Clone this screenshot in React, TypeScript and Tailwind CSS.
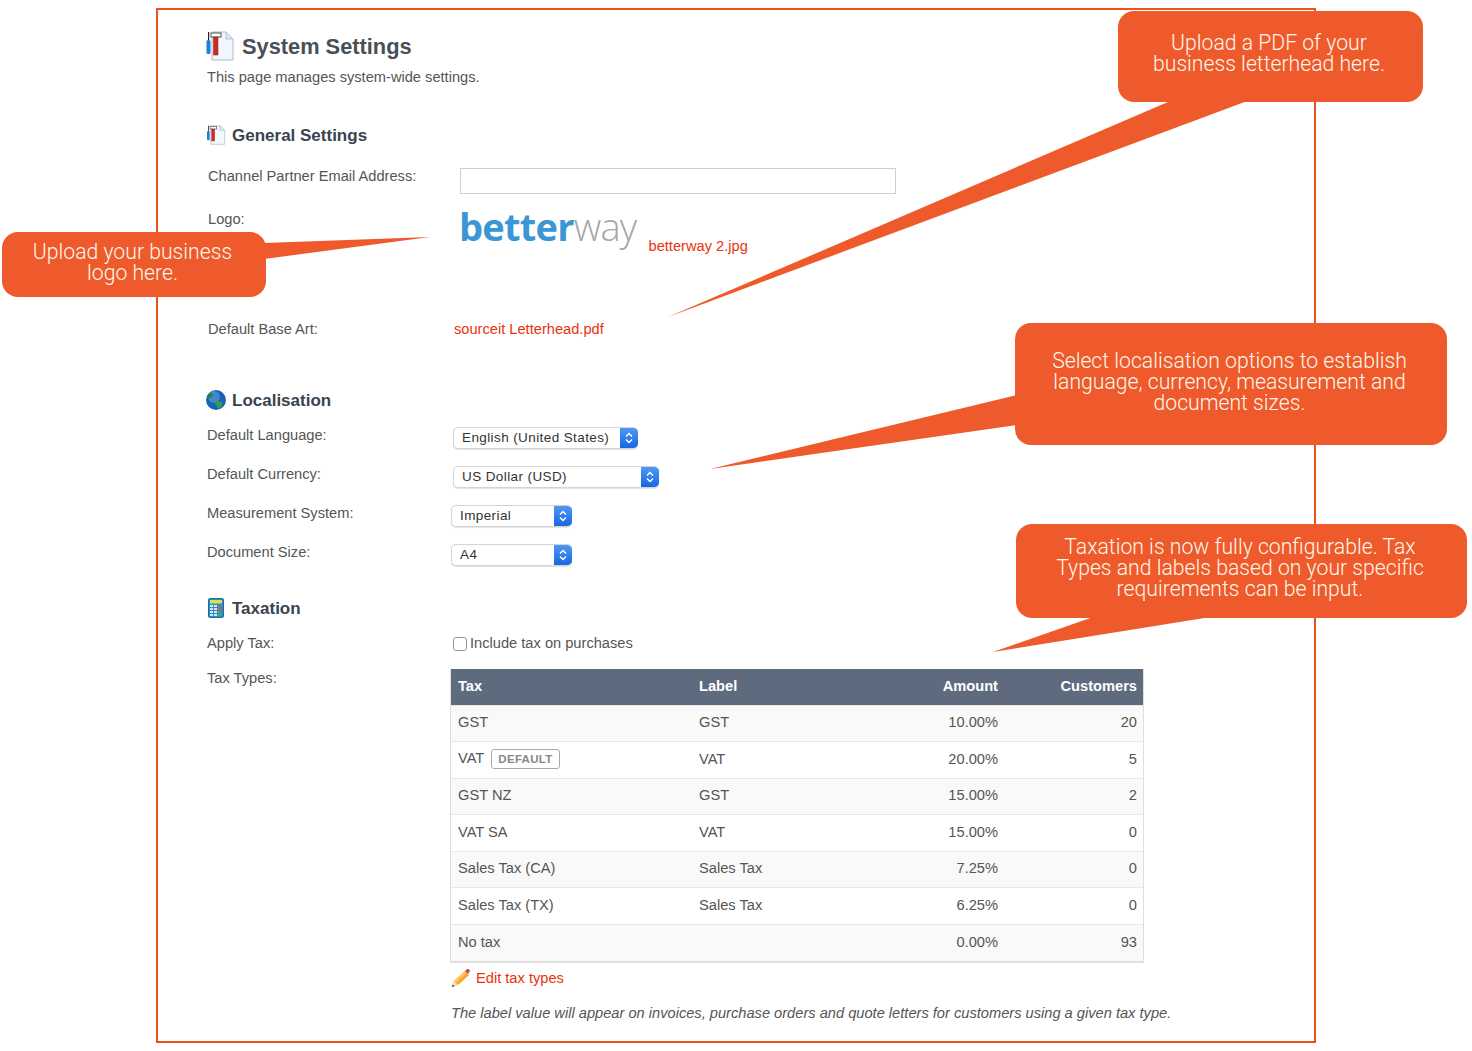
import type { ReactNode } from 'react';

const TAX_ROWS = [
  { tax: 'GST', label: 'GST', amount: '10.00%', customers: 20 },
  { tax: 'VAT', label: 'VAT', amount: '20.00%', customers: 5, isDefault: true },
  { tax: 'GST NZ', label: 'GST', amount: '15.00%', customers: 2 },
  { tax: 'VAT SA', label: 'VAT', amount: '15.00%', customers: 0 },
  { tax: 'Sales Tax (CA)', label: 'Sales Tax', amount: '7.25%', customers: 0 },
  { tax: 'Sales Tax (TX)', label: 'Sales Tax', amount: '6.25%', customers: 0 },
  { tax: 'No tax', label: '', amount: '0.00%', customers: 93 },
];

function SettingsIcon({ className }: { className: string }) {
  return (
    <svg viewBox="0 0 28 30" className={className}>
      <path d="M6 1h14l7 7v21H6z" fill="#f1f7fd" stroke="#a9bad2" strokeWidth="1" />
      <path d="M20 1v7h7z" fill="#dbe7f4" stroke="#b4c4da" strokeWidth="1" />
      <rect x="5" y="2" width="10" height="4" fill="#fff" stroke="#555" strokeWidth="1" />
      <rect x="7.500" y="6" width="4.500" height="18" fill="#cf2a22" stroke="#8e1d18" strokeWidth="0.5" />
      <rect x="2" y="1" width="1.200" height="9" fill="#222" />
      <rect x="0.500" y="9" width="4" height="14" rx="1.500" fill="#1f7fd6" />
    </svg>
  );
}

function GlobeIcon() {
  return (
    <svg viewBox="0 0 20 20" className="h-5 w-5 shrink-0">
      <circle cx="10" cy="10" r="10" fill="#1b62b4" />
      <circle cx="8" cy="7" r="6" fill="#5aa0dc" opacity="0.6" />
      <path d="M9 13c2-2 5-2 7-1 1 1 0 4-2 6-2 1-3 0-3-2s-3-1-2-3z" fill="#2fa244" />
      <path d="M1 6c2-2 4-3 6-2 0 2-3 4-5 5z" fill="#2c7a3e" />
    </svg>
  );
}

function CalculatorIcon() {
  return (
    <svg viewBox="0 0 16 20" className="h-5 w-4 shrink-0">
      <rect x="0.500" y="0.500" width="15" height="19" rx="1.500" fill="#2f8fc4" stroke="#1d6b9c" />
      <rect x="2" y="2" width="12" height="3.500" fill="#d8e05a" />
      {[7, 10, 13, 16].map((y) =>
        [2, 6, 10].map((x) => (
          <rect key={`${x}-${y}`} x={x} y={y} width="3" height="2" fill={x === 10 && y < 12 ? '#e2574c' : x === 10 ? '#4caf50' : '#d5e8f5'} />
        )),
      )}
    </svg>
  );
}

function PencilIcon() {
  return (
    <svg viewBox="0 0 20 20" className="h-5 w-5 shrink-0">
      <path d="M1 19l2-6L14 3l4 4L7 17z" fill="#f5a623" />
      <path d="M3 13l11-10 2 2L5 15z" fill="#fbc65c" />
      <path d="M14 3l1.500-1.500c1-.8 2-.6 2.700.1.7.8.8 1.800 0 2.700L17 6z" fill="#c9445a" />
      <path d="M1 19l2-6 4 4z" fill="#f6dfb5" />
      <path d="M1 19l.8-2.500 1.700 1.700z" fill="#333" />
    </svg>
  );
}

function SectionHeading({ icon, children, className }: { icon: ReactNode; children: ReactNode; className: string }) {
  return (
    <div className={`flex h-6 items-center gap-[6px] ${className}`}>
      {icon}
      <h2 className="pt-[2px] text-[17px] leading-6 font-bold text-[#3a4350]">{children}</h2>
    </div>
  );
}

function FakeSelect({ value, className }: { value: string; className: string }) {
  return (
    <div className={`flex h-[22px] overflow-hidden rounded-[5px] border border-r-0 border-[#d4d4d4] bg-white shadow-[0_1px_1px_rgba(0,0,0,0.12)] ${className}`}>
      <span className="flex-1 pl-[8px] text-[13.500px] leading-5 tracking-[0.4px] text-[#333]">{value}</span>
      <span className="flex w-[18px] items-center justify-center bg-gradient-to-b from-[#4d97f8] to-[#1766e2]">
        <svg viewBox="0 0 10 14" className="h-[14px] w-[10px]" fill="none" stroke="#fff" strokeWidth="1.500">
          <path d="M2 5.500L5 2.500 8 5.500M2 8.500L5 11.500 8 8.500" />
        </svg>
      </span>
    </div>
  );
}

function Callout({ lines, className }: { lines: string[]; className: string }) {
  return (
    <div className={`absolute flex flex-col rounded-[16px] bg-[#ee5a2b] pr-[3px] text-center font-['Roboto',sans-serif] text-[21.200px] leading-[21px] font-light text-[#fff8ea] ${className}`}>
      {lines.map((line) => (
        <span key={line}>{line}</span>
      ))}
    </div>
  );
}

export default function App() {
  return (
    <div className="relative h-[1051px] w-[1472px] overflow-hidden bg-white font-['Liberation_Sans',sans-serif] text-[14.650px] leading-5 text-[#555]">
      {/* settings page */}
      <div className="mt-2 ml-[156px] h-[1035px] w-[1160px] border-2 border-[#f0501a] pt-[18px] pl-[49px]">
        <div className="-ml-px flex h-9 items-center gap-[8px]">
          <SettingsIcon className="h-[30px] w-[28px] shrink-0" />
          <h1 className="pt-[2px] text-[21.800px] font-bold text-[#4a4f57]">System Settings</h1>
        </div>
        <p className="mt-[3px]">This page manages system-wide settings.</p>

        <SectionHeading className="mt-[36px] -ml-px" icon={<SettingsIcon className="h-5 w-5 shrink-0" />}>
          General Settings
        </SectionHeading>

        <div className="mt-[13px] flex h-10 pl-px">
          <label className="w-[243px] pt-[6px]">Channel Partner Email Address:</label>
          <div className="mt-2 ml-[9px] h-[26px] w-[436px] border border-[#cfcfcf] bg-white" />
        </div>

        <div className="flex h-[100px] pl-px">
          <label className="w-[243px] pt-[9px]">Logo:</label>
          <div className="ml-[8px] flex h-[60px] items-start">
            <span className="font-['Open_Sans',sans-serif] text-[38px] leading-[52px] tracking-[-0.75px]">
              <span className="font-bold text-[#3a97d4]">better</span>
              <span className="font-light text-[#a4a7aa]">way</span>
            </span>
            <a className="mt-[36px] ml-3 text-[#e8330c]">betterway 2.jpg</a>
          </div>
        </div>

        <div className="mt-[19px] flex h-5 pl-px">
          <label className="w-[243px]">Default Base Art:</label>
          <a className="ml-[3px] text-[#e8330c]">sourceit Letterhead.pdf</a>
        </div>

        <SectionHeading className="mt-[49px] -ml-px" icon={<GlobeIcon />}>
          Localisation
        </SectionHeading>

        <div className="mt-[13px] flex h-[39px]">
          <label className="w-[244px]">Default Language:</label>
          <FakeSelect value="English (United States)" className="mt-[2px] ml-[2px] w-[185px]" />
        </div>
        <div className="flex h-[39px]">
          <label className="w-[244px]">Default Currency:</label>
          <FakeSelect value="US Dollar (USD)" className="mt-[2px] ml-[2px] w-[206px]" />
        </div>
        <div className="flex h-[39px]">
          <label className="w-[244px]">Measurement System:</label>
          <FakeSelect value="Imperial" className="mt-[2px] w-[121px]" />
        </div>
        <div className="flex h-[39px]">
          <label className="w-[244px]">Document Size:</label>
          <FakeSelect value="A4" className="mt-[2px] w-[121px]" />
        </div>

        <SectionHeading className="mt-[15px] pl-px" icon={<CalculatorIcon />}>
          <span className="ml-[2px]">Taxation</span>
        </SectionHeading>

        <div className="mt-[13px] flex h-5">
          <label className="w-[244px]">Apply Tax:</label>
          <span className="mt-[4px] ml-[2px] h-[14px] w-[14px] rounded-[3px] border border-[#999] bg-white" />
          <span className="ml-[3px]">Include tax on purchases</span>
        </div>

        <div className="mt-[15px] flex">
          <label className="w-[244px]">Tax Types:</label>
          <div className="mt-px w-[693px]">
            <div className="-ml-px w-[694px] border-x border-b-2 border-[#dedede]">
              <table className="w-full border-collapse">
                <thead>
                  <tr className="h-[36px] bg-[#5e6b7f] text-white">
                    <th className="w-[248px] pb-[2px] pl-[7px] text-left font-bold">Tax</th>
                    <th className="pb-[2px] text-left font-bold">Label</th>
                    <th className="pb-[2px] text-right font-bold">Amount</th>
                    <th className="w-[145px] pr-[6px] pb-[2px] text-right font-bold">Customers</th>
                  </tr>
                </thead>
                <tbody>
                  {TAX_ROWS.map((row, i) => (
                    <tr key={row.tax} className={`h-[36.500px] border-t border-[#e8e8e8] ${i % 2 === 0 ? 'bg-[#f9f9f9]' : 'bg-white'}`}>
                      <td className="pb-[2px] pl-[7px]">
                        {row.tax}
                        {row.isDefault && (
                          <span className="ml-[7px] inline-block rounded-[3px] border border-[#aaa] px-[6px] text-[11.500px] leading-[18px] font-bold tracking-[0.3px] text-[#888]">
                            DEFAULT
                          </span>
                        )}
                      </td>
                      <td className="pb-[2px]">{row.label}</td>
                      <td className="pb-[2px] text-right">{row.amount}</td>
                      <td className="pr-[6px] pb-[2px] text-right">{row.customers}</td>
                    </tr>
                  ))}
                </tbody>
              </table>
            </div>
            <div className="mt-[5px] flex h-5 items-center gap-[5px]">
              <PencilIcon />
              <a className="text-[#e8330c]">Edit tax types</a>
            </div>
            <p className="mt-[15px] whitespace-nowrap italic">
              The label value will appear on invoices, purchase orders and quote letters for customers using a given tax type.
            </p>
          </div>
        </div>
      </div>

      {/* callout tails */}
      <svg className="absolute top-0 left-0 h-[1051px] w-[1472px]" viewBox="0 0 1472 1051">
        <path d="M1172.600 100L668 317 1250 100z" fill="#ee5a2b" />
        <path d="M264 243L430 237 264 259z" fill="#ee5a2b" />
        <path d="M1017 395L710 469 1017 425z" fill="#ee5a2b" />
        <path d="M1096 616L993 652 1217 616z" fill="#ee5a2b" />
      </svg>

      <Callout className="top-[11px] left-[1118px] h-[91px] w-[305px] pt-[21px]" lines={['Upload a PDF of your', 'business letterhead here.']} />
      <Callout className="top-[232px] left-[2px] h-[65px] w-[264px] pt-[9px]" lines={['Upload your business', 'logo here.']} />
      <Callout
        className="top-[323px] left-[1015px] h-[122px] w-[432px] pt-[27px]"
        lines={['Select localisation options to establish', 'language, currency, measurement and', 'document sizes.']}
      />
      <Callout
        className="top-[524px] left-[1016px] h-[94px] w-[451px] pt-[12px]"
        lines={['Taxation is now fully configurable. Tax', 'Types and labels based on your specific', 'requirements can be input.']}
      />
    </div>
  );
}
